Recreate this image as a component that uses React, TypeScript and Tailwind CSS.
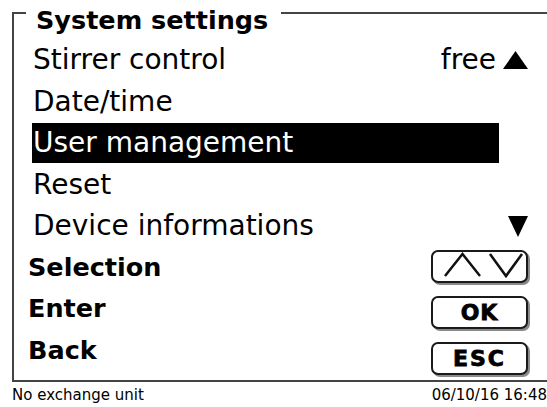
import React from "react";

function UpTri() {
  return (
    <svg width="25" height="18" viewBox="0 0 25 18" className="block">
      <polygon points="12.5,0 25,18 0,18" fill="#000" />
    </svg>
  );
}

function DownTri() {
  return (
    <svg width="20" height="21" viewBox="0 0 20 21" className="block">
      <polygon points="0,0 20,0 10,21" fill="#000" />
    </svg>
  );
}

function Btn({ children }: { children: React.ReactNode }) {
  return (
    <div className="w-[97px] h-[33px] border-2 border-[#1a1a1a] rounded-[7px] shadow-[2px_2px_0_0_#8a8a8a] flex items-center justify-center bg-white">
      {children}
    </div>
  );
}

export default function App() {
  return (
    <div className="w-[547px] h-[407px] bg-white text-black font-['DejaVu_Sans',Verdana,sans-serif] overflow-hidden">
      <div className="pt-[12px]">
        <div className="ml-[12px] border-l-2 border-t-2 border-b-2 border-[#444] pb-[5px]">
          <div className="-mt-[9px] ml-[12px] w-fit bg-white pl-[10px] pr-[13px] h-[30px] leading-[30px] text-[25.5px] font-bold whitespace-nowrap">
            System settings
          </div>
          <div className="ml-[18px] mr-[19px] mt-[4.25px]">
            <div className="h-[41.5px] flex items-center justify-between text-[28px] leading-none">
              <span className="pl-[1px]">Stirrer control</span>
              <span className="flex items-center gap-[7px]">
                free
                <UpTri />
              </span>
            </div>
            <div className="h-[41.5px] flex items-center text-[28px] leading-none">
              <span className="pl-[1px]">Date/time</span>
            </div>
            <div className="h-[41.5px] flex items-center text-[28px] leading-none">
              <div className="h-[40px] w-[467px] bg-black text-white flex items-center pl-[1px]">
                User management
              </div>
            </div>
            <div className="h-[41.5px] flex items-center text-[28px] leading-none">
              <span className="pl-[1px]">Reset</span>
            </div>
            <div className="h-[41.5px] flex items-center justify-between text-[28px] leading-none">
              <span className="pl-[1px]">Device informations</span>
              <DownTri />
            </div>
            <div className="flex justify-between items-start">
              <div className="-ml-[4px] flex flex-col text-[25.5px] font-bold leading-none">
                <div className="h-[41.5px] flex items-center">Selection</div>
                <div className="h-[41.5px] flex items-center">Enter</div>
                <div className="h-[41.5px] flex items-center">Back</div>
              </div>
              <div className="pt-[3.25px] flex flex-col gap-[13px]">
                <Btn>
                  <svg width="93" height="29" viewBox="0 0 93 29" className="block">
                    <polyline points="12,24 29.5,2 47,24" fill="none" stroke="#111" strokeWidth="2.5" />
                    <polyline points="57,2 73,24 89,2" fill="none" stroke="#111" strokeWidth="2.5" />
                  </svg>
                </Btn>
                <Btn>
                  <span className="text-[22px] font-bold leading-none tracking-[1px] [-webkit-text-stroke:0.8px_#000]">OK</span>
                </Btn>
                <Btn>
                  <span className="text-[22px] font-bold leading-none tracking-[2px] [-webkit-text-stroke:0.8px_#000]">ESC</span>
                </Btn>
              </div>
            </div>
          </div>
        </div>
      </div>
      <div className="flex justify-between items-start pl-[12px] pt-[6px] h-[25px] text-[15px] leading-[15px] whitespace-nowrap">
        <span>No exchange unit</span>
        <span>06/10/16 16:48</span>
      </div>
    </div>
  );
}
